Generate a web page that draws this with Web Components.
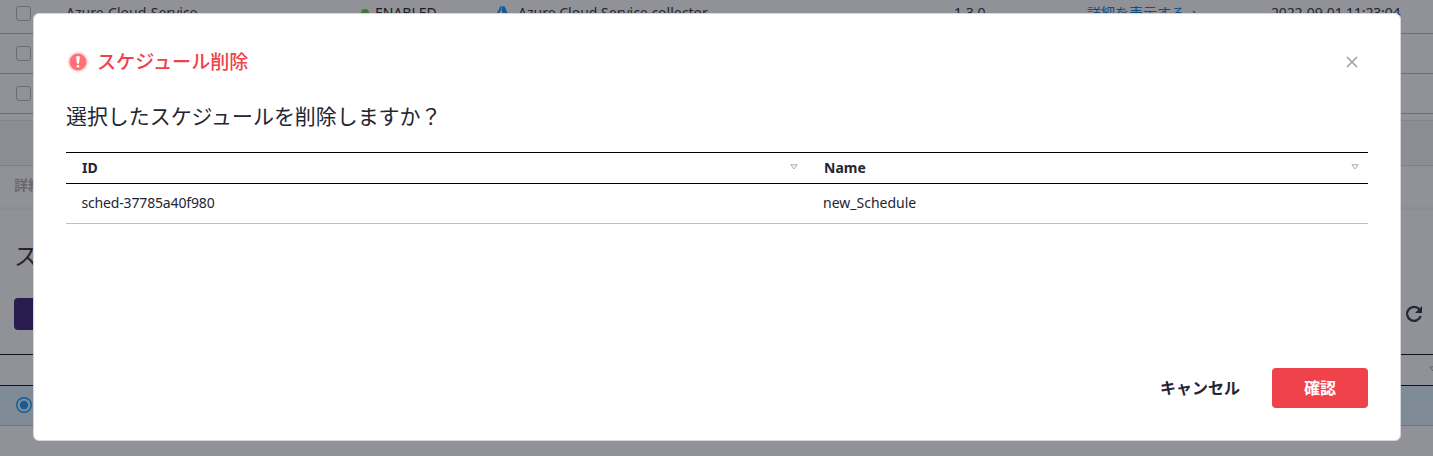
<!DOCTYPE html>
<html lang="ja">
<head>
<meta charset="utf-8">
<title>スケジュール削除</title>
<style>
html,body{margin:0;height:100%;overflow:hidden}
body{font:14px/20px "Noto Sans","Noto Sans CJK JP",sans-serif;color:#232533;background:#919297}
</style>
</head>
<body>
<schedule-app></schedule-app>
<script>
const define = (name, html) => customElements.define(name, class extends HTMLElement {
  constructor() {
    super();
    const t = document.createElement('template');
    t.innerHTML = html;
    this.attachShadow({mode: 'open'}).append(t.content.cloneNode(true));
  }
});

define('sort-mark', `<style>:host{display:block;width:8px;height:6px}svg{display:block}</style>
<svg width="8" height="6" viewBox="0 0 8 6"><path d="M.9 .8h6.2L4 5z" fill="none" stroke="var(--mark,#a7a8b0)" stroke-width="1"/></svg>`);

define('check-box', `<style>:host{display:block;box-sizing:border-box;width:15px;height:15px;border:1px solid #6b6c76;border-radius:3px}</style>`);

define('collector-row', `<style>
:host{display:grid;grid-template-columns:66px 295px 134px 459px 133px 184px 1fr;align-items:center;height:38px;padding-bottom:1px;border-bottom:1px solid #6d6e77;white-space:nowrap}
check-box{margin-left:16px}
</style><check-box></check-box><slot></slot>`);

define('status-label', `<style>:host{display:flex;align-items:center;gap:6px;color:#1b1c27}i{width:8px;height:8px;border-radius:50%;background:#3c7b36}</style><i></i><slot></slot>`);

define('azure-label', `<style>:host{display:flex;align-items:center;gap:7px}svg{display:block}</style>
<svg width="16" height="14" viewBox="0 0 16 14"><path d="M5.6 0 .6 9.8l3.3-.3L6.8 .6z" fill="#155b97"/><path d="M7.4 0 6.4 5l3.2 4.2L3 12.5h12L9.6 .2z" fill="#155b97"/></svg><slot></slot>`);

define('detail-link', `<style>:host{display:flex;align-items:center;gap:7px;color:#104f86}svg{margin-top:2px}</style><slot></slot>
<svg width="6" height="9" viewBox="0 0 6 9"><path d="M1 .8 4.6 4.5 1 8.2" fill="none" stroke="currentColor" stroke-width="1.2"/></svg>`);

define('page-backdrop', `<style>
:host{display:block;height:456px;overflow:hidden}
.list{display:flex;flex-direction:column;margin-top:-6px}
.date{letter-spacing:-.15px}
.foot{height:6px;border-bottom:1px solid #83848a}
.band{height:44px;background:#8c8d92;border-bottom:1px solid #7f8087}
.tab{height:41px;line-height:38px;padding-left:14px;font-weight:700;color:#666771;border-bottom:3px solid #8d8e93}
.title{display:flex;height:88px;align-items:center;padding-left:14px;font-size:24px;box-sizing:border-box;padding-top:4px}
.tools{display:flex;justify-content:space-between;align-items:center;height:32px;padding:0 9px 0 14px}
.tools b{width:120px;height:32px;border-radius:4px;background:#291d50}
.head{display:flex;justify-content:flex-end;align-items:center;height:30px;margin-top:24px;border:solid #101116;border-width:1px 0}
.head sort-mark{--mark:#666771;margin-right:-4px;margin-top:-3px}
.sel{display:flex;align-items:center;height:38px;padding-bottom:1px;background:#7f8c97;border-bottom:1px solid #6d7683;padding-left:16px}
svg{display:block}
</style>
<div class="list">
<collector-row><span>Azure-Cloud-Service</span><status-label>ENABLED</status-label><azure-label>Azure Cloud Service collector</azure-label><span>1.3.0</span><detail-link>詳細を表示する</detail-link><span class="date">2022-09-01 11:23:04</span></collector-row>
<collector-row></collector-row><collector-row></collector-row>
</div>
<div class="foot"></div><div class="band"></div><div class="tab">詳細</div>
<div class="title">スケジュール</div>
<div class="tools"><b></b><svg width="20" height="20" viewBox="0 0 20 20"><path d="M15.2 5A7 7 0 1 0 16.7 12.2" fill="none" stroke="#232533" stroke-width="2.3"/><path d="M18 2v7h-7z" fill="#232533"/></svg></div>
<div class="head"><sort-mark></sort-mark></div>
<div class="sel"><svg width="16" height="16" viewBox="0 0 16 16"><circle cx="8" cy="8" r="7.3" fill="none" stroke="#155b97" stroke-width="1.4"/><circle cx="8" cy="8" r="4.2" fill="#155b97"/></svg></div>`);

define('alert-icon', `<style>:host{display:block;width:24px;height:24px}svg{display:block;overflow:visible}</style>
<svg width="24" height="24" viewBox="0 0 24 24"><defs><filter id="g" x="-30%" y="-30%" width="160%" height="160%"><feGaussianBlur stdDeviation="1"/></filter></defs>
<circle cx="12" cy="12" r="9.8" fill="#ffb7bb" opacity=".75" filter="url(#g)"/><circle cx="12" cy="12" r="8.5" fill="#ff7279"/>
<path d="M10.2 7.3q0-1.2 1.8-1.2t1.8 1.2l-.7 5.7q-.1.8-1.1.8t-1.1-.8z" fill="#fff"/><circle cx="12" cy="16.2" r="1.3" fill="#fff"/></svg>`);

define('data-table', `<style>
:host{display:block}
.r{display:grid;grid-template-columns:742px 1fr}
.h{height:30px;border:solid #000;border-width:1px 0;align-items:center;font-weight:700}
.h div{display:flex;justify-content:space-between;align-items:center;padding:0 9px 0 16px}
.h div:first-child{padding-right:10px}
.h sort-mark{margin-top:-3px}
.b{height:37px;padding-bottom:2px;border-bottom:1px solid #bfc0c5;align-items:center}
.b ::slotted(*){padding-left:15.4px;letter-spacing:-.15px}
.b ::slotted(:last-child){padding-left:15px;letter-spacing:0}
</style>
<div class="r h"><div><slot name="h1"></slot><sort-mark></sort-mark></div><div><slot name="h2"></slot><sort-mark></sort-mark></div></div>
<div class="r b"><slot></slot></div>`);

define('modal-button', `<style>
:host{display:flex;align-items:center;justify-content:center;box-sizing:border-box;height:40px;padding:0 32px 1px;border-radius:4px;font-size:16px;font-weight:700}
:host([danger]){background:#ef424a;color:#fff}
</style><slot></slot>`);

define('modal-dialog', `<style>
:host{position:absolute;left:33px;top:13px;width:1368px;height:428px;box-sizing:border-box;background:#fff;border:1px solid #d6d7dc;border-radius:6px;padding:31px 32px 32px;display:flex;flex-direction:column;overflow:hidden}
header{display:flex;align-items:center;height:34px;font-size:19.1px;font-weight:500;color:#ef424a}
header slot{display:block;flex:1}
alert-icon{margin-right:7px}
.x{margin-right:10px;display:block}
main{flex:1}
footer{display:flex;justify-content:flex-end}
</style>
<header><alert-icon></alert-icon><slot name="title"></slot><svg class="x" width="12" height="12" viewBox="0 0 12 12"><path d="M1 1l10 10M11 1 1 11" stroke="#9b9ca5" stroke-width="1.5"/></svg></header>
<main><slot></slot></main><footer><slot name="actions"></slot></footer>`);

define('schedule-app', `<style>
:host{display:block;position:relative;height:456px;overflow:hidden}
p{margin:21px 0 20px;font-size:20.95px;line-height:32px}
</style>
<page-backdrop></page-backdrop>
<modal-dialog><span slot="title">スケジュール削除</span>
<p>選択したスケジュールを削除しますか？</p>
<data-table><span slot="h1">ID</span><span slot="h2">Name</span><span>sched-37785a40f980</span><span>new_Schedule</span></data-table>
<modal-button slot="actions">キャンセル</modal-button><modal-button slot="actions" danger>確認</modal-button>
</modal-dialog>`);
</script>
</body>
</html>
